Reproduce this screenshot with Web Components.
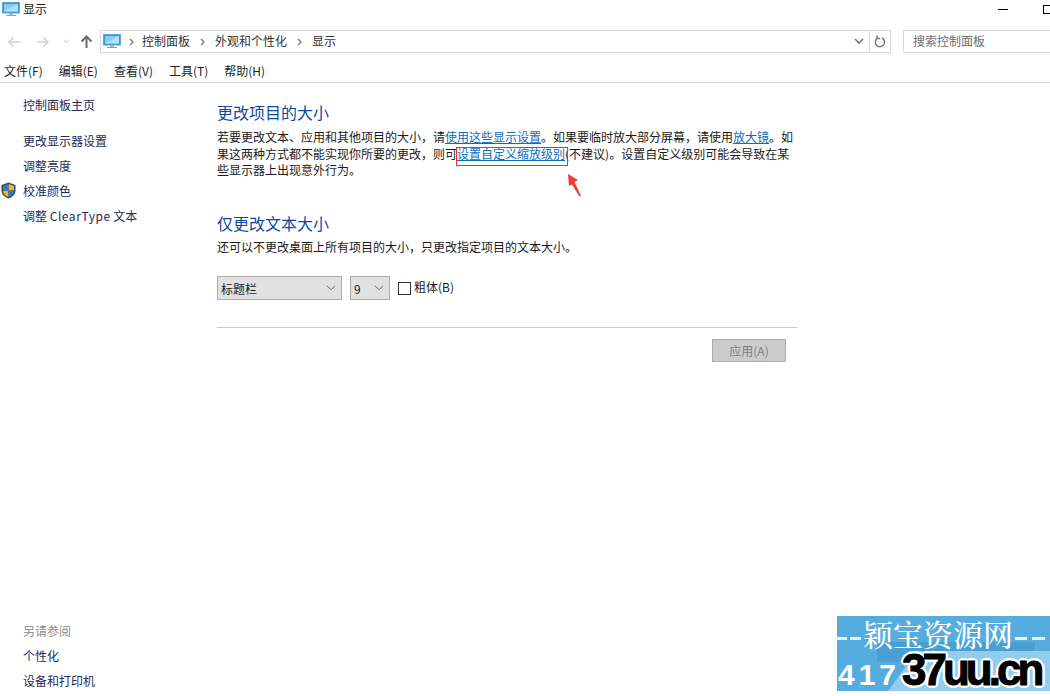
<!DOCTYPE html>
<html lang="zh">
<head>
<meta charset="utf-8">
<title>显示</title>
<style>
    html, body { margin: 0; height: 100%; background: #fff; }
    body {
        font: 12px/16px "Noto Sans CJK SC", "Liberation Sans", sans-serif;
        color: #1a1a1a;
        overflow: hidden;
    }
</style>
</head>
<body>
<cp-window></cp-window>

<template id="monitor-icon">
    <svg width="18" height="15" viewBox="0 0 18 15">
        <rect x="0.5" y="0.5" width="17" height="10.500" fill="#2c9ae6" stroke="#5da5d8"/>
        <path d="M2 2h14v7.500H2z" fill="#86cdf3"/>
        <path d="M2 9.500 16 2v7.500z" fill="#b4e2f9"/>
        <rect x="7" y="11" width="4" height="2" fill="#a9bac5"/>
        <rect x="4" y="13" width="10" height="1" fill="#8ea3b1"/>
    </svg>
</template>

<script>
const monitorIcon = () => document.getElementById('monitor-icon').innerHTML;

class WinTitlebar extends HTMLElement {
    connectedCallback() {
        this.attachShadow({ mode: 'open' }).innerHTML = `
            <style>
                :host { display: flex; align-items: center; height: 18px; padding-left: 2px; }
                .name { margin-left: 3px; flex: 1; }
                svg { display: block; flex: none; }
                .min { width: 10px; height: 1px; background: #000; margin-right: 35px; }
                .max { height: 9px; border: 1px solid #000; border-right: 0; box-sizing: border-box; width: 7px; }
            </style>
            ${monitorIcon()}
            <span class="name">显示</span>
            <span class="min"></span>
            <span class="max"></span>
        `;
    }
}

class WinAddressbar extends HTMLElement {
    connectedCallback() {
        const sep = '<svg width="5" height="8" viewBox="0 0 5 8"><path d="m1 1 3 3-3 3" fill="none" stroke="#777" stroke-width="1.300"/></svg>';
        this.attachShadow({ mode: 'open' }).innerHTML = `
            <style>
                :host { display: flex; align-items: center; height: 23px; margin-top: 12px; }
                .nav { display: flex; align-items: center; width: 100px; flex: none; }
                .nav svg { display: block; flex: none; }
                .addr {
                    display: flex; align-items: center; width: 791px; height: 23px; flex: none;
                    box-sizing: border-box; border: 1px solid #d9d9d9;
                }
                .addr .pc { margin-left: 2px; display: flex; }
                .crumb { color: #333; position: relative; top: -1px; }
                .sep { width: 25px; display: flex; justify-content: center; flex: none; }
                .sep.first { width: 21px; justify-content: flex-start; padding-left: 8px; box-sizing: border-box; }
                .spacer { flex: 1; }
                .drop { width: 20px; display: flex; justify-content: center; }
                .refresh {
                    width: 20px; height: 21px; border-left: 1px solid #d9d9d9;
                    display: flex; align-items: center; justify-content: center;
                }
                .search {
                    margin-left: 12px; flex: 1; height: 23px; box-sizing: border-box;
                    border: 1px solid #d9d9d9; border-right: 0; padding-left: 9px;
                    line-height: 19px; color: #6d6d6d;
                }
            </style>
            <div class="nav">
                <svg style="margin-left:7px" width="14" height="12" viewBox="0 0 14 12"><path d="M13 6H2M6.500 1.500 2 6l4.500 4.500" fill="none" stroke="#d4d4d4" stroke-width="1.600"/></svg>
                <svg style="margin-left:15px" width="14" height="12" viewBox="0 0 14 12"><path d="M1 6h11M7.500 1.500 12 6l-4.500 4.500" fill="none" stroke="#d4d4d4" stroke-width="1.600"/></svg>
                <svg style="margin-left:13px" width="7" height="5" viewBox="0 0 7 5"><path d="m1 1 2.500 2.500L6 1" fill="none" stroke="#d8d8d8" stroke-width="1.200"/></svg>
                <svg style="margin-left:10px" width="13" height="13" viewBox="0 0 13 13"><path d="M6.500 13V2M1.500 6.500l5-5 5 5" fill="none" stroke="#6d6d6d" stroke-width="2"/></svg>
            </div>
            <div class="addr">
                <span class="pc">${monitorIcon()}</span>
                <span class="sep first">${sep}</span>
                <span class="crumb">控制面板</span>
                <span class="sep">${sep}</span>
                <span class="crumb">外观和个性化</span>
                <span class="sep">${sep}</span>
                <span class="crumb">显示</span>
                <span class="spacer"></span>
                <span class="drop"><svg width="10" height="7" viewBox="0 0 10 7"><path d="m1 1 4 4 4-4" fill="none" stroke="#777" stroke-width="1.600"/></svg></span>
                <span class="refresh"><svg width="12" height="13" viewBox="0 0 12 13"><path d="M3.500 3.200A4.600 4.600 0 1 0 8 3M3 .5v3h3.200" fill="none" stroke="#777" stroke-width="1.500"/></svg></span>
            </div>
            <div class="search">搜索控制面板</div>
        `;
    }
}

class WinMenubar extends HTMLElement {
    connectedCallback() {
        this.attachShadow({ mode: 'open' }).innerHTML = `
            <style>
                :host {
                    display: flex; gap: 16px; height: 30px; padding: 9px 0 0 4px;
                    box-sizing: border-box; line-height: 18px; border-bottom: 1px solid #dcdcdc; color: #222;
                }
            </style>
            <span>文件(F)</span><span>编辑(E)</span><span>查看(V)</span><span>工具(T)</span><span>帮助(H)</span>
        `;
    }
}

class NavLink extends HTMLElement {
    connectedCallback() {
        this.attachShadow({ mode: 'open' }).innerHTML = `
            <style>
                :host { display: block; position: relative; height: 25px; line-height: 25px; color: #1c2a55; padding-left: 23px; }
                :host([muted]) { color: #8c8c8c; }
                ::slotted(svg) { position: absolute; left: 1px; top: 4px; }
                ::slotted(span) { letter-spacing: .55px; }
            </style>
            <slot name="icon"></slot><slot></slot>
        `;
    }
}

class CpSidebar extends HTMLElement {
    connectedCallback() {
        this.attachShadow({ mode: 'open' }).innerHTML = `
            <style>
                :host { display: flex; flex-direction: column; width: 217px; flex: none; padding: 9px 0 3px; box-sizing: border-box; }
                .gap { height: 11px; flex: none; }
                .push { flex: 1; }
            </style>
            <slot name="top"></slot>
            <div class="gap"></div>
            <slot></slot>
            <div class="push"></div>
            <slot name="bottom"></slot>
        `;
    }
}

class CpSection extends HTMLElement {
    connectedCallback() {
        this.attachShadow({ mode: 'open' }).innerHTML = `
            <style>
                :host { display: block; }
                h2 { margin: 0 0 5px; font: 400 16px/24px "Noto Sans CJK SC", sans-serif; color: #0d4a9e; }
                :host([compact]) h2 { margin-bottom: 4px; }
                .body { display: block; line-height: 16.500px; color: #1a1a1a; white-space: nowrap; }
            </style>
            <h2>${this.getAttribute('heading')}</h2>
            <div class="body"><slot></slot></div>
        `;
    }
}

class CpSelect extends HTMLElement {
    connectedCallback() {
        this.attachShadow({ mode: 'open' }).innerHTML = `
            <style>
                :host {
                    display: flex; align-items: center; justify-content: space-between; height: 24px;
                    box-sizing: border-box; border: 1px solid #adadad; background: #e1e1e1;
                    padding: 2px 5px 0 3px; color: #1a1a1a; white-space: nowrap; flex: none;
                }
                svg { position: relative; top: -1px; }
            </style>
            <slot></slot>
            <svg width="10" height="6" viewBox="0 0 10 6"><path d="m1 .8 4 4 4-4" fill="none" stroke="#666"/></svg>
        `;
    }
}

class CpFontControls extends HTMLElement {
    connectedCallback() {
        this.attachShadow({ mode: 'open' }).innerHTML = `
            <style>
                :host { display: flex; align-items: center; }
                .check { width: 13px; height: 13px; box-sizing: border-box; border: 1px solid #333; background: #fff; margin: 0 3px 0 8px; flex: none; }
                .label { position: relative; top: -1px; }
                .kind { width: 125px; }
                .size { width: 40px; margin-left: 8px; }
            </style>
            <cp-select class="kind">标题栏</cp-select>
            <cp-select class="size">9</cp-select>
            <span class="check"></span>
            <span class="label">粗体(B)</span>
        `;
    }
}

class CpMain extends HTMLElement {
    connectedCallback() {
        this.attachShadow({ mode: 'open' }).innerHTML = `
            <style>
                :host { display: block; position: relative; flex: none; width: 580px; padding-top: 17px; }
                a { color: #0f6cbd; text-decoration: underline; }
                cp-section + cp-section { margin-top: 32px; }
                cp-font-controls { margin-top: 21px; }
                hr { margin: 27px 0 0; border: 0; border-top: 1px solid #c9c9c9; }
                .actions { display: flex; justify-content: flex-end; padding: 11px 11px 0 0; }
                button {
                    width: 74px; height: 23px; box-sizing: border-box; padding: 0;
                    border: 1px solid #adadad; background: #cccccc; color: #7f7f7f;
                    font: inherit; line-height: 19px;
                }
                .mark { position: absolute; left: 239px; top: 64px; width: 112px; height: 19px; box-sizing: border-box; border: 1px solid #e8312f; }
                .arrow { position: absolute; left: 350px; top: 90px; }
            </style>
            <cp-section heading="更改项目的大小">若要更改文本、应用和其他项目的大小，请<a>使用这些显示设置</a>。如果要临时放大部分屏幕，请使用<a>放大镜</a>。如<br>果这两种方式都不能实现你所要的更改，则可<a>设置自定义缩放级别</a>(不建议)。设置自定义级别可能会导致在某<br>些显示器上出现意外行为。</cp-section>
            <cp-section compact heading="仅更改文本大小">还可以不更改桌面上所有项目的大小，只更改指定项目的文本大小。</cp-section>
            <cp-font-controls></cp-font-controls>
            <hr>
            <div class="actions"><button disabled>应用(A)</button></div>
            <span class="mark"></span>
            <svg class="arrow" width="15" height="24" viewBox="0 0 15 24"><path d="M1 1 11 7 7.500 9 14 23 12.500 23.500 5 11.500 2 13z" fill="#f0373a"/></svg>
        `;
    }
}

class SiteWatermark extends HTMLElement {
    connectedCallback() {
        this.attachShadow({ mode: 'open' }).innerHTML = `
            <style>
                :host { position: absolute; right: 0; bottom: 5px; width: 213px; height: 75px; background: #55acdf; display: block; }
                .band { position: absolute; left: 40px; top: 26px; width: 158px; height: 20px; background: #4a9fd2; }
                .light { position: absolute; inset: 0; background: #93cdee; clip-path: polygon(51px 75px, 80px 35px, 213px 35px, 213px 75px); }
                .head {
                    position: absolute; left: 26px; top: 1px;
                    color: #fff; font: 500 30px/32px "Noto Serif CJK SC", "Noto Sans CJK SC", serif; white-space: nowrap;
                }
                .dash { position: absolute; top: 21px; height: 3px; background: #e8f5fc; }
                .num { position: absolute; left: 1px; bottom: 1px; color: #fff; font: 700 30px/30px "Liberation Sans", sans-serif; letter-spacing: 4px; }
                .domain {
                    position: absolute; left: 65px; bottom: 3px; color: #000;
                    font: 700 44px/36px "Liberation Sans", sans-serif; letter-spacing: -4px; white-space: nowrap;
                    -webkit-text-stroke: 1px #000;
                    text-shadow: 3px 0 #fff, -3px 0 #fff, 0 3px #fff, 0 -3px #fff, 2px 2px #fff, -2px 2px #fff, 2px -2px #fff, -2px -2px #fff;
                }
            </style>
            <div class="band"></div>
            <div class="light"></div>
            <span class="dash" style="left:0;width:10px"></span>
            <span class="dash" style="left:13px;width:11px"></span>
            <span class="dash" style="left:178px;width:12px"></span>
            <span class="dash" style="left:195px;width:13px"></span>
            <div class="head">颖宝资源网</div>
            <div class="num">417</div>
            <div class="domain">37uu.cn</div>
        `;
    }
}

class CpWindow extends HTMLElement {
    connectedCallback() {
        this.attachShadow({ mode: 'open' }).innerHTML = `
            <style>
                :host { display: flex; flex-direction: column; height: 696px; position: relative; }
                .content { display: flex; flex: 1; min-height: 0; }
            </style>
            <win-titlebar></win-titlebar>
            <win-addressbar></win-addressbar>
            <win-menubar></win-menubar>
            <div class="content">
                <cp-sidebar>
                    <nav-link slot="top">控制面板主页</nav-link>
                    <nav-link>更改显示器设置</nav-link>
                    <nav-link>调整亮度</nav-link>
                    <nav-link>
                        <svg slot="icon" width="15" height="17" viewBox="0 0 15 17">
                            <path d="M7.500 .5 14.500 3v5.500c0 4-3 6.500-7 8-4-1.500-7-4-7-8V3z" fill="#3a4a66"/>
                            <path d="M7.500 2 7.500 8.500H13V4zM7.500 8.500V15c-3-1.300-5.500-3.200-5.500-6.500z" fill="#f4b321"/>
                            <path d="M7.500 2 2 4v4.500h5.500zM7.500 8.500V15c3-1.300 5.500-3.200 5.500-6.500z" fill="#2a7fd0"/>
                        </svg>校准颜色</nav-link>
                    <nav-link>调整 <span>ClearType</span> 文本</nav-link>
                    <nav-link slot="bottom" muted>另请参阅</nav-link>
                    <nav-link slot="bottom">个性化</nav-link>
                    <nav-link slot="bottom">设备和打印机</nav-link>
                </cp-sidebar>
                <cp-main></cp-main>
            </div>
            <site-watermark></site-watermark>
        `;
    }
}

customElements.define('nav-link', NavLink);
customElements.define('cp-select', CpSelect);
customElements.define('cp-section', CpSection);
customElements.define('cp-font-controls', CpFontControls);
customElements.define('cp-main', CpMain);
customElements.define('cp-sidebar', CpSidebar);
customElements.define('win-titlebar', WinTitlebar);
customElements.define('win-addressbar', WinAddressbar);
customElements.define('win-menubar', WinMenubar);
customElements.define('site-watermark', SiteWatermark);
customElements.define('cp-window', CpWindow);
</script>
</body>
</html>
